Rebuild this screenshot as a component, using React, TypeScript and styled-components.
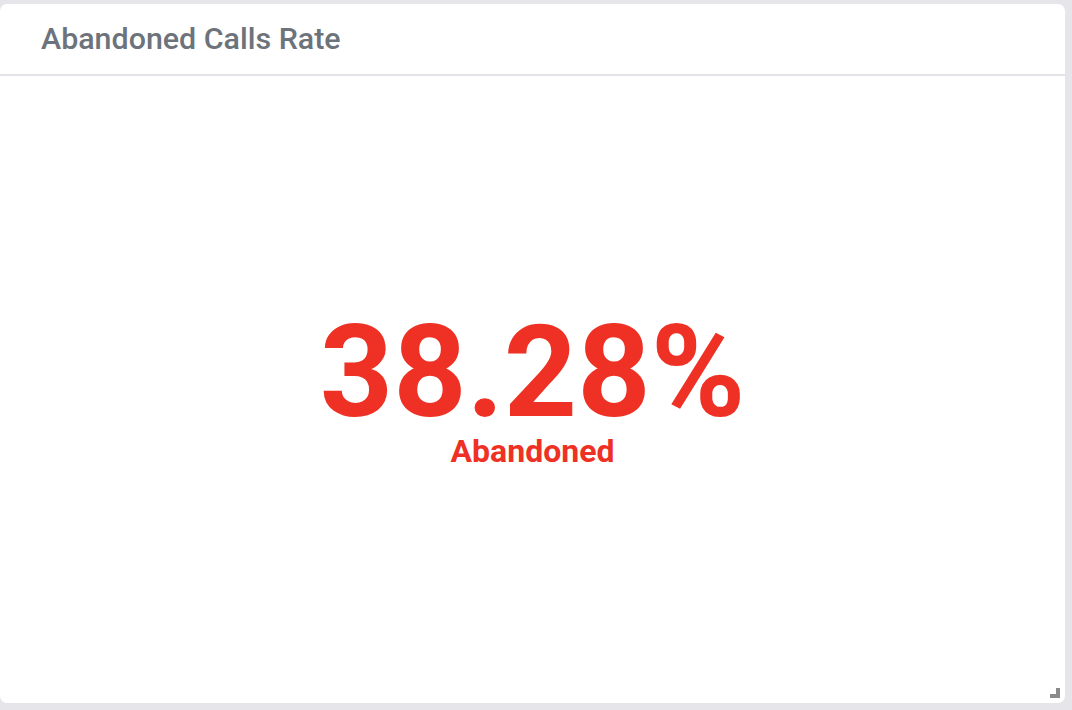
import React from 'react'
import styled, { createGlobalStyle } from 'styled-components'

const GlobalStyle = createGlobalStyle`
  html, body {
    margin: 0;
    padding: 0;
    background: #e6e6ea;
    font-family: Roboto, "Liberation Sans", Arial, sans-serif;
  }
`

const Page = styled.div`
  width: 1072px;
  height: 710px;
  box-sizing: border-box;
  padding: 4px 7px 7px 0;
  display: flex;
`

const Card = styled.section`
  position: relative;
  flex: 1;
  display: flex;
  flex-direction: column;
  background: #fff;
  border-radius: 7px;
  overflow: hidden;
`

const Header = styled.header`
  height: 72px;
  box-sizing: border-box;
  border-bottom: 2px solid #e3e3ea;
  display: flex;
  align-items: center;
  padding: 0 0 1px 41px;
`

const Title = styled.h2`
  margin: 0;
  font-size: 30.4px;
  font-weight: 500;
  color: #6c737b;
`

const Body = styled.div`
  flex: 1;
  display: flex;
  flex-direction: column;
  align-items: center;
  justify-content: center;
`

const Value = styled.div`
  font-size: 128px;
  font-weight: 700;
  line-height: 0.95;
  color: #ee3124;
`

const Label = styled.div`
  margin-top: 2px;
  font-size: 32px;
  line-height: 1;
  font-weight: 700;
  color: #ee3124;
`

const ResizeHandle = styled.span`
  position: absolute;
  right: 5px;
  bottom: 5px;
  width: 10px;
  height: 10px;
  box-sizing: border-box;
  border-right: 4px solid #8a8a8a;
  border-bottom: 4px solid #8a8a8a;
`

export default function App() {
  return (
    <>
      <GlobalStyle />
      <Page>
        <Card>
          <Header>
            <Title>Abandoned Calls Rate</Title>
          </Header>
          <Body>
            <Value>38.28%</Value>
            <Label>Abandoned</Label>
          </Body>
          <ResizeHandle />
        </Card>
      </Page>
    </>
  )
}
